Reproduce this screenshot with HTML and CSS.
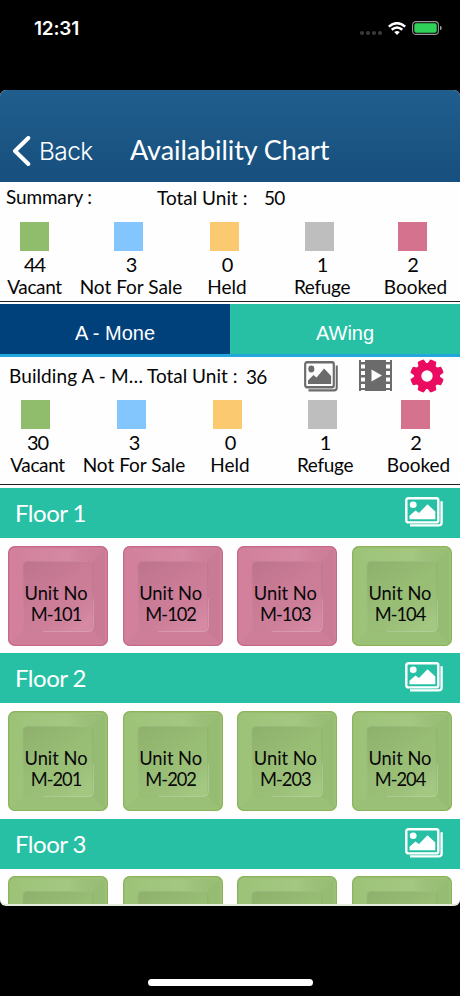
FILE: index.html
```html
<!DOCTYPE html>
<html lang="en">
<head>
<meta charset="utf-8">
<title>Availability Chart</title>
<link rel="stylesheet" href="styles.css">
</head>
<body>
<svg class="defs" width="0" height="0" aria-hidden="true">
  <defs>
    <linearGradient id="face" x1="0" y1="0" x2="0.7" y2="1"><stop offset="0" stop-color="#000" stop-opacity=".1"/><stop offset=".55" stop-color="#000" stop-opacity=".03"/><stop offset="1" stop-color="#fff" stop-opacity=".07"/></linearGradient>
    <linearGradient id="rim" x1="0" y1="0" x2="1" y2="0"><stop offset="0" stop-color="#fff" stop-opacity="0"/><stop offset=".6" stop-color="#fff" stop-opacity=".07"/><stop offset="1" stop-color="#000" stop-opacity=".03"/></linearGradient>
    <symbol id="key" viewBox="0 0 100 100">
      <rect width="100" height="100" rx="7" fill="currentColor"/>
      <path d="M3 3H97L84 15H15Z" fill="url(#rim)"/>
      <path d="M97 3V97L84 85V15Z" fill="#000" opacity=".04"/>
      <path d="M3 97H97L84 85H15Z" fill="#000" opacity=".015"/>
      <rect x="14.500" y="15" width="71" height="71" rx="5" fill="url(#face)"/>
      <path d="M15 80V20Q15 15.500 20 15.500H80" fill="none" stroke="#fff" stroke-opacity=".08"/>
      <path d="M85.500 53V80Q85.500 85.500 80 85.500H35" fill="none" stroke="#fff" stroke-opacity=".18"/>
      <rect x=".6" y=".6" width="98.800" height="98.800" rx="6.500" fill="none" class="key-edge" stroke-width="1.200"/>
    </symbol>
    <symbol id="gallery" viewBox="0 0 38 31" preserveAspectRatio="none">
      <rect x="1.300" y="1.300" width="32" height="25" rx="2" fill="none" stroke="currentColor" stroke-width="2.400"/>
      <path d="M5 29.300H33.500Q36.600 29.300 36.600 26.500V4.500" fill="none" stroke="currentColor" stroke-width="2.300"/>
      <circle cx="8.200" cy="8" r="3.400" fill="currentColor"/>
      <path d="M4.500 23V19.500L10.500 14L14 16.500L22.500 7.500L30.300 15V23Z" fill="currentColor"/>
    </symbol>
  </defs>
</svg>
<header class="status">
  <span class="clock">12:31</span>
  <span class="dots"><i></i><i></i><i></i><i></i></span>
  <svg class="wifi" viewBox="0 0 18 13"><g fill="none" stroke="#fff" stroke-width="2.500"><path d="M.8 4.600Q9-2.300 17.200 4.600"/><path d="M3.700 7.800Q9 3.300 14.300 7.800"/></g><path d="M6.200 10Q9 7.900 11.800 10L9 12.900Z" fill="#fff"/></svg>
  <svg class="battery" viewBox="0 0 30 14"><rect x=".6" y=".6" width="25.800" height="12.800" rx="3.500" fill="none" stroke="#999" stroke-width="1.100"/><rect x="2.300" y="2.200" width="22.400" height="9.600" rx="2" fill="#30d158"/><path d="M28 4.700Q29.800 5.200 29.800 7T28 9.300Z" fill="#999"/></svg>
</header>
<main class="panel">
  <div class="nav">
    <svg class="chevron" viewBox="0 0 18 30"><path d="M15.800 2L2.500 15L15.800 28" fill="none" stroke="#fff" stroke-width="4" stroke-linecap="round" stroke-linejoin="round"/></svg>
    <span class="back">Back</span>
    <h1>Availability Chart</h1>
  </div>
  <section class="summary">
    <div class="heading"><span class="name">Summary :</span><span class="total">Total Unit :</span><span class="count">50</span></div>
    <div class="stats">
      <div class="stat"><i class="swatch vacant"></i><b>44</b><span class="tight">Vacant</span></div>
      <div class="stat"><i class="swatch sale"></i><b>3</b><span>Not For Sale</span></div>
      <div class="stat"><i class="swatch held"></i><b>0</b><span>Held</span></div>
      <div class="stat"><i class="swatch refuge"></i><b>1</b><span class="tight">Refuge</span></div>
      <div class="stat"><i class="swatch booked"></i><b class="last">2</b><span>Booked</span></div>
    </div>
  </section>
  <nav class="tabs"><span class="tab active">A - Mone</span><span class="tab">AWing</span></nav>
  <section class="building">
    <div class="heading"><span class="name">Building A - M…</span><span class="total">Total Unit :</span><span class="count">36</span>
      <svg class="icon gallery-icon"><use href="#gallery"/></svg>
      <svg class="icon film" viewBox="0 0 33 31"><path fill="currentColor" fill-rule="evenodd" d="M0 0H33V31H0ZM2 4.500V8.500H6V4.500ZM2 11V15H6V11ZM2 17.500V21.500H6V17.500ZM2 24V28H6V24ZM27 4.500V8.500H31V4.500ZM27 11V15H31V11ZM27 17.500V21.500H31V17.500ZM27 24V28H31V24ZM12.500 9.500V21.500L23 15.500ZM2 0V2H6V0ZM27 0V2H31V0ZM2 30V31H6V30ZM27 30V31H31V30Z"/></svg>
      <svg class="icon gear" viewBox="-17 -17 34 34"><g fill="currentColor"><path fill-rule="evenodd" d="M-13 0A13 13 0 1 0 13 0A13 13 0 1 0-13 0ZM-5.700 0A5.700 5.700 0 1 1 5.700 0A5.700 5.700 0 1 1-5.700 0Z"/><g transform="rotate(22.500)"><g id="teeth"><path id="tooth" d="M-4.500-11L-3.300-16.500Q0-17.200 3.300-16.500L4.500-11Z"/><use href="#tooth" transform="rotate(90)"/><use href="#tooth" transform="rotate(180)"/><use href="#tooth" transform="rotate(270)"/></g><use href="#teeth" transform="rotate(45)"/></g></g></svg>
    </div>
    <div class="stats">
      <div class="stat"><i class="swatch vacant"></i><b>30</b><span class="tight">Vacant</span></div>
      <div class="stat"><i class="swatch sale"></i><b>3</b><span>Not For Sale</span></div>
      <div class="stat"><i class="swatch held"></i><b>0</b><span>Held</span></div>
      <div class="stat"><i class="swatch refuge"></i><b>1</b><span class="tight">Refuge</span></div>
      <div class="stat"><i class="swatch booked"></i><b class="last">2</b><span>Booked</span></div>
    </div>
  </section>
  <section class="floor">
    <h2>Floor 1<svg><use href="#gallery"/></svg></h2>
    <div class="units">
      <div class="unit taken"><svg><use href="#key"/></svg><span>Unit No<br><em>M-101</em></span></div>
      <div class="unit taken"><svg><use href="#key"/></svg><span>Unit No<br><em>M-102</em></span></div>
      <div class="unit taken"><svg><use href="#key"/></svg><span>Unit No<br><em>M-103</em></span></div>
      <div class="unit"><svg><use href="#key"/></svg><span>Unit No<br><em>M-104</em></span></div>
    </div>
  </section>
  <section class="floor">
    <h2>Floor 2<svg><use href="#gallery"/></svg></h2>
    <div class="units">
      <div class="unit"><svg><use href="#key"/></svg><span>Unit No<br><em>M-201</em></span></div>
      <div class="unit"><svg><use href="#key"/></svg><span>Unit No<br><em>M-202</em></span></div>
      <div class="unit"><svg><use href="#key"/></svg><span>Unit No<br><em>M-203</em></span></div>
      <div class="unit"><svg><use href="#key"/></svg><span>Unit No<br><em>M-204</em></span></div>
    </div>
  </section>
  <section class="floor">
    <h2>Floor 3<svg><use href="#gallery"/></svg></h2>
    <div class="units">
      <div class="unit"><svg><use href="#key"/></svg></div>
      <div class="unit"><svg><use href="#key"/></svg></div>
      <div class="unit"><svg><use href="#key"/></svg></div>
      <div class="unit"><svg><use href="#key"/></svg></div>
    </div>
  </section>
</main>
<footer><i class="home"></i></footer>
</body>
</html>
```
FILE: styles.css
```css
* { box-sizing: border-box; }
body { margin: 0; width: 460px; height: 996px; overflow: hidden; background: #000; color: #050505; font-family: Lato, sans-serif; }
.defs { display: block; height: 0; }
svg { display: block; flex: none; }
i { display: block; }
.status { height: 90px; padding: 17px 17px 0 34px; display: flex; align-items: flex-start; }
.clock { color: #fff; font: 600 19px/24px Inter, sans-serif; letter-spacing: -.2px; width: 326px; }
.dots { display: flex; gap: 2px; margin-top: 14px; width: 28px; }
.dots i { width: 4px; height: 4px; border-radius: 50%; background: #3b3b3b; }
.wifi { width: 18px; height: 13px; margin-top: 5px; }
.battery { width: 30px; height: 14px; margin: 4px 0 0 6px; }
.panel { height: 816px; overflow: hidden; border-radius: 6px; background: #fefefe; border-bottom: 2px solid #e3ebda; }
.nav { height: 92px; padding: 45px 0 0 12px; display: flex; align-items: flex-start; background: linear-gradient(#205e8d, #174f7e); color: #fff; }
.chevron { width: 19px; height: 30px; margin-top: 1px; }
.back { width: 99px; padding-left: 8px; font: 300 24.5px/32px Inter, sans-serif; letter-spacing: -.6px; }
h1 { margin: 0; font: 400 27px/30px Lato, sans-serif; letter-spacing: -.08px; white-space: nowrap; }
.summary { height: 122px; border-bottom: 2px solid #fff; box-shadow: inset 0 -1px #222; }
.heading { display: flex; font-size: 19px; line-height: 22px; white-space: nowrap; }
.summary .heading { height: 40px; padding: 4px 0 0 6px; }
.summary .name { width: 151px; letter-spacing: -.15px; }
.summary .total { width: 107px; padding-top: 1px; }
.count { padding-top: 1px; width: 21px; letter-spacing: -.8px; }
.stats { display: grid; grid-template-columns: 97px 96px 96px 94px 93px; margin-left: -14px; font-size: 19px; line-height: 22px; }
.stat { display: flex; flex-direction: column; align-items: center; white-space: nowrap; }
.stat b { font-weight: 400; font-size: 20px; margin-top: 2px; letter-spacing: -1px; }
.stat span { padding-top: 1px; }
.stat .last { margin-right: 6px; }
.tight { letter-spacing: -.35px; }
.swatch { width: 29px; height: 29px; margin-right: 5px; }
.vacant { background: #8fbd6c; margin-right: 0; }
.sale { background: #82c6fd; }
.held { background: #fac970; }
.refuge { background: #bebebe; margin-right: 6px; }
.booked { background: #d5738f; margin-right: 6px; }
.tabs { display: flex; height: 53px; border-bottom: 3px solid #22a7dc; }
.tab { flex: 1; background: #27c0a5; color: #fff; text-align: center; font: 20px/58px "Liberation Sans", sans-serif; height: 50px; }
.active { background: #00417c; }
.building { height: 131px; border-bottom: 3px solid #fff; box-shadow: inset 0 -1px #222; }
.building .heading { height: 43px; padding: 8px 0 0 9px; }
.building .name { width: 138px; letter-spacing: .1px; }
.building .total { width: 99px; }
.building .stats { margin-left: -11px; }
.building .vacant { margin-right: 5px; }
.icon { height: 31px; color: #6b6b6b; }
.gallery-icon { width: 34px; height: 31px; margin: -4px 0 0 37px; }
.film { width: 33px; margin: -5px 0 0 21px; }
.gear { width: 34px; height: 34px; margin: -6.5px 0 0 18px; color: #ea0c61; }
.floor { height: 165.3px; }
h2 { display: flex; justify-content: space-between; margin: 0; height: 50px; padding: 8px 17px 0 15px; background: #27c0a5; color: #fff; font: 400 24px/34px Lato, sans-serif; letter-spacing: -.5px; }
h2 svg { width: 38px; height: 30px; margin-top: 1px; }
.units { display: flex; justify-content: space-between; padding: 7.5px 8px; }
.unit { --edge: #82aa4c; display: grid; width: 100px; height: 100px; color: #9dc378; }
.unit > * { grid-area: 1 / 1; }
.unit svg { width: 100px; height: 100px; }
.key-edge { stroke: var(--edge); stroke-opacity: .65; }
.unit span { z-index: 1; padding: 37px 4px 0 0; color: #080808; text-align: center; font-size: 18.3px; line-height: 21px; }
.unit em { font-style: normal; letter-spacing: -1px; }
.taken { --edge: #bd5d7a; color: #d2809c; }
footer { height: 90px; padding-top: 73px; }
.home { width: 165px; height: 7px; margin-left: 148px; border-radius: 4px; background: #fff; }
```
